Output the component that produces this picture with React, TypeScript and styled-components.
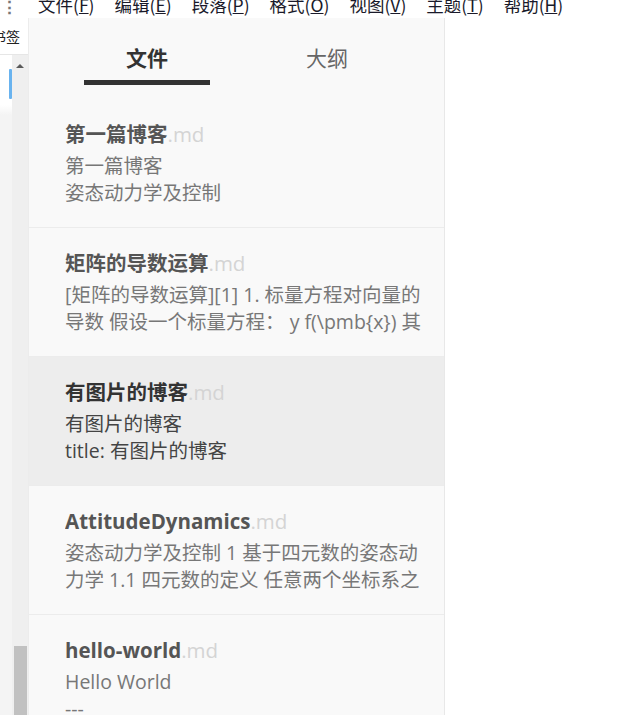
import styled, { createGlobalStyle } from "styled-components";

const GlobalStyle = createGlobalStyle`
  html, body {
    margin: 0;
    padding: 0;
    background: #ffffff;
    overflow: hidden;
  }
  body {
    font-family: "Open Sans", "Noto Sans CJK SC", sans-serif;
  }
`;

const menus = [
  { label: "文件", key: "F" },
  { label: "编辑", key: "E" },
  { label: "段落", key: "P" },
  { label: "格式", key: "O" },
  { label: "视图", key: "V" },
  { label: "主题", key: "T" },
  { label: "帮助", key: "H" },
];

const files = [
  { id: 1, name: "第一篇博客", summary: "第一篇博客\n姿态动力学及控制" },
  {
    id: 2,
    name: "矩阵的导数运算",
    summary:
      "[矩阵的导数运算][1] 1. 标量方程对向量的导数 假设一个标量方程： y f(\\pmb{x}) 其中 \\pmb{x} 是一个向量",
  },
  { id: 3, name: "有图片的博客", summary: "有图片的博客\ntitle: 有图片的博客", active: true },
  {
    id: 4,
    name: "AttitudeDynamics",
    summary: "姿态动力学及控制 1 基于四元数的姿态动力学 1.1 四元数的定义 任意两个坐标系之间的转换",
  },
  { id: 5, name: "hello-world", summary: "Hello World\n---\nlayout: post" },
];

function App() {
  return (
    <Page>
      <GlobalStyle />
      <MenuBar>
        <MoreDots>⋮</MoreDots>
        {menus.map(({ label, key }) => (
          <MenuItem key={key}>
            {label}(<u>{key}</u>)
          </MenuItem>
        ))}
      </MenuBar>
      <Body>
        <LeftStrip>
          <BookmarkTab>书签</BookmarkTab>
          <LeftLower>
            <LeftGutter>
              <BlueMark />
            </LeftGutter>
            <ScrollTrack>
              <ArrowUp />
              <ScrollSpacer />
              <ScrollThumb />
            </ScrollTrack>
          </LeftLower>
        </LeftStrip>
        <Sidebar>
          <Tabs>
            <Tab $active>
              文件
              <TabLine $active />
            </Tab>
            <Tab>
              大纲
              <TabLine />
            </Tab>
          </Tabs>
          <FileList>
            {files.map(({ id, name, summary, active }) => (
              <FileItem key={id} $active={active}>
                <FileTitle $active={active}>
                  {name}
                  <Ext>.md</Ext>
                </FileTitle>
                <Summary $active={active}>{summary}</Summary>
              </FileItem>
            ))}
          </FileList>
        </Sidebar>
        <Editor />
      </Body>
    </Page>
  );
}

const Page = styled.div`
  width: 640px;
  height: 715px;
  display: flex;
  flex-direction: column;
  overflow: hidden;
  background: #ffffff;
`;

const MenuBar = styled.div`
  height: 18px;
  flex-shrink: 0;
  display: flex;
  align-items: flex-end;
  overflow: hidden;
  font-family: "Noto Sans CJK SC", sans-serif;
  font-size: 17.5px;
  line-height: 24px;
  color: #1a1a2a;
`;

const MoreDots = styled.span`
  width: 37px;
  padding-left: 1px;
  color: #777;
  font-weight: 700;
  font-size: 17px;
  flex-shrink: 0;
`;

const MenuItem = styled.span`
  margin-right: 20px;
  margin-bottom: 1px;
  white-space: nowrap;

  u {
    text-decoration-thickness: 1px;
    text-underline-offset: 1px;
  }
`;

const Body = styled.div`
  flex: 1;
  display: flex;
  min-height: 0;
`;

const LeftStrip = styled.div`
  width: 29px;
  flex-shrink: 0;
  display: flex;
  flex-direction: column;
  overflow: hidden;
  border-right: 1px solid #ececec;
  box-sizing: border-box;
`;

const BookmarkTab = styled.div`
  height: 37px;
  flex-shrink: 0;
  display: flex;
  align-items: center;
  justify-content: flex-end;
  padding-right: 8px;
  font-family: "Noto Sans CJK SC", sans-serif;
  font-size: 14px;
  color: #222;
  white-space: nowrap;
  border-bottom: 1px solid #e6e6e6;
  box-sizing: border-box;
`;

const LeftLower = styled.div`
  flex: 1;
  display: flex;
`;

const LeftGutter = styled.div`
  width: 12px;
  flex-shrink: 0;
  display: flex;
  justify-content: flex-end;
  padding-top: 14px;
  box-sizing: border-box;
  background: linear-gradient(#ffffff 0 50px, #f4f4f4 60px);
`;

const BlueMark = styled.div`
  width: 3px;
  height: 30px;
  background: #69b3ef;
  border-radius: 1px;
`;

const ScrollTrack = styled.div`
  flex: 1;
  display: flex;
  flex-direction: column;
  align-items: center;
  background: #efefef;
  padding-top: 9px;
`;

const ArrowUp = styled.div`
  width: 0;
  height: 0;
  border-left: 4px solid transparent;
  border-right: 4px solid transparent;
  border-bottom: 4px solid #5a5a5a;
`;

const ScrollSpacer = styled.div`
  flex: 1;
`;

const ScrollThumb = styled.div`
  width: 13px;
  height: 69px;
  background: #c1c1c1;
`;

const Sidebar = styled.aside`
  width: 416px;
  flex-shrink: 0;
  display: flex;
  flex-direction: column;
  background: #f9f9f9;
  border-right: 1px solid #e8e8e8;
  box-sizing: border-box;
  overflow: hidden;
`;

const Tabs = styled.div`
  display: flex;
  padding: 25px 27px 0 28px;
  flex-shrink: 0;
`;

const Tab = styled.div<{ $active?: boolean }>`
  flex: 1;
  display: flex;
  flex-direction: column;
  align-items: center;
  gap: 9px;
  font-family: "Noto Sans CJK SC", sans-serif;
  font-size: 21px;
  line-height: 28px;
  font-weight: ${(p) => (p.$active ? 700 : 400)};
  color: ${(p) => (p.$active ? "#333" : "#666")};
`;

const TabLine = styled.div<{ $active?: boolean }>`
  width: 126px;
  height: 5px;
  background: ${(p) => (p.$active ? "#333" : "transparent")};
`;

const FileList = styled.div`
  margin-top: 14px;
  display: flex;
  flex-direction: column;
`;

const FileItem = styled.div<{ $active?: boolean }>`
  padding: 20px 20px 21px 36px;
  border-bottom: 1px solid #ececec;
  background: ${(p) => (p.$active ? "#ededed" : "transparent")};
  flex-shrink: 0;
`;

const FileTitle = styled.div<{ $active?: boolean }>`
  font-size: 20.5px;
  line-height: 30px;
  font-weight: 700;
  color: ${(p) => (p.$active ? "#333" : "#555")};
  white-space: nowrap;
  overflow: hidden;
`;

const Ext = styled.span`
  font-weight: 400;
  color: #d4d4d4;
`;

const Summary = styled.div<{ $active?: boolean }>`
  margin-top: 3px;
  font-size: 19.5px;
  line-height: 27px;
  height: 54px;
  color: ${(p) => (p.$active ? "#444" : "#777")};
  white-space: pre-line;
  overflow: hidden;
`;

const Editor = styled.main`
  flex: 1;
  background: #ffffff;
`;

export default App;
